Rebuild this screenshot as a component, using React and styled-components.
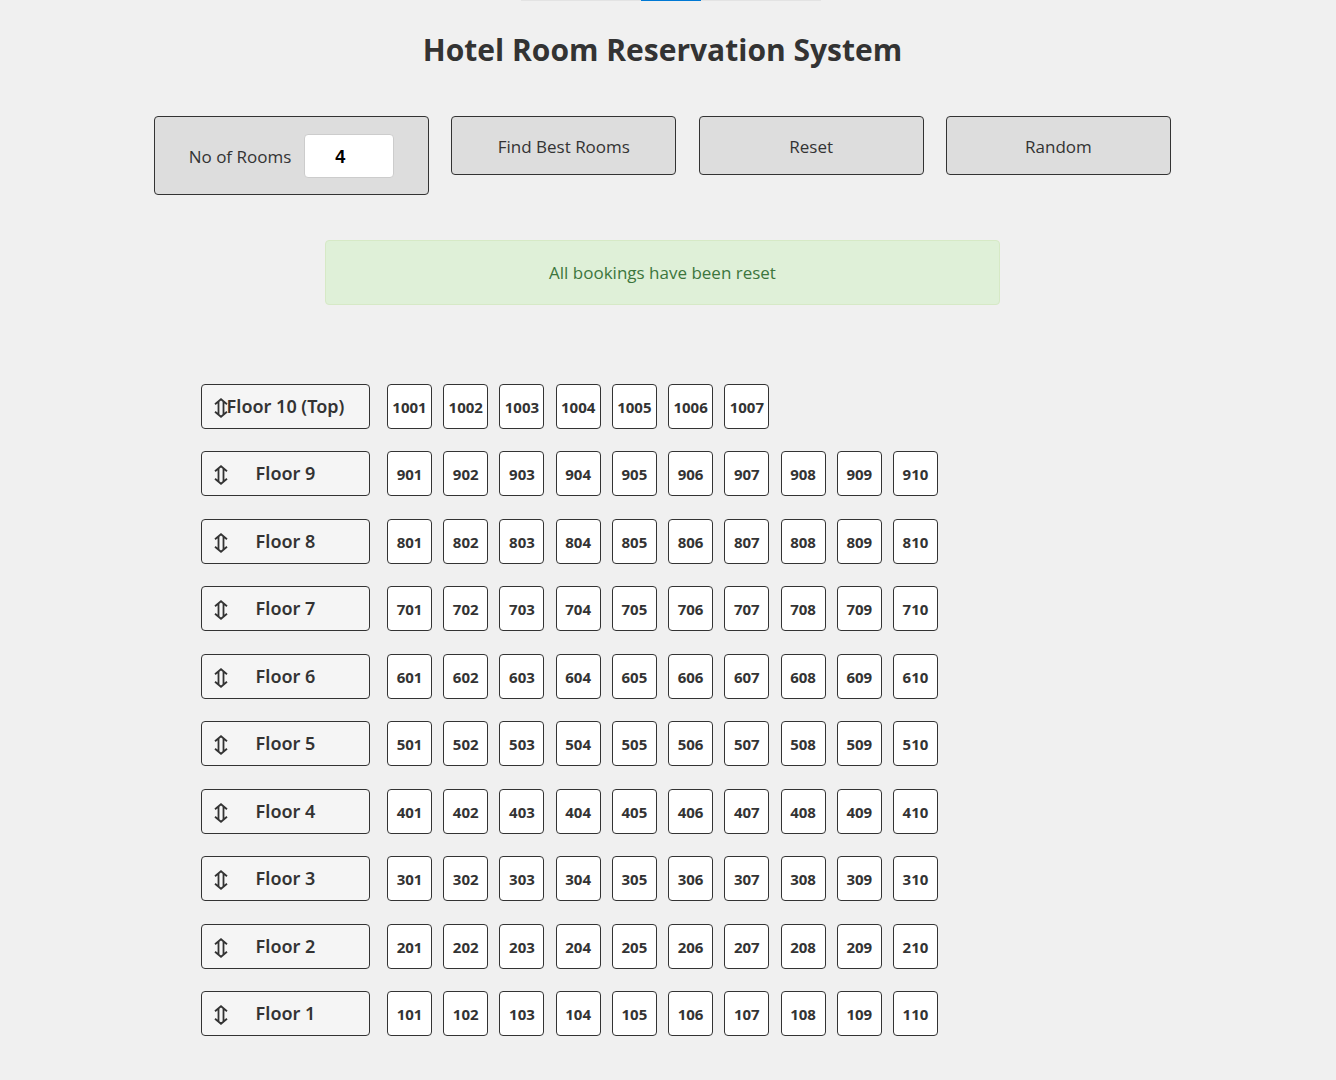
import React, { useState } from "react";
import styled, { createGlobalStyle } from "styled-components";

const GlobalStyle = createGlobalStyle`
  *, *::before, *::after { box-sizing: border-box; }
  body {
    margin: 0;
    background: #f0f0f0;
    color: #333;
    font-family: "Segoe UI", "Open Sans", "Noto Sans", sans-serif;
    font-size: 18px;
  }
  button, input { font: inherit; color: inherit; margin: 0; }
`;

const Page = styled.div`
  position: relative;
  display: flex;
  flex-direction: column;
  align-items: center;
  padding: 26px 11px 44px 0;
`;

const TabStrip = styled.div`
  position: absolute;
  top: 0;
  left: 0;
  right: 0;
  height: 1px;
  display: flex;
  justify-content: center;
  padding-left: 5px;
`;

const TabEdge = styled.span`
  width: ${(p) => (p.$active ? 60 : 120)}px;
  background: ${(p) => (p.$active ? "#0078d4" : "#e3e3e3")};
`;

const Title = styled.h1`
  margin: 0 0 42px;
  font-size: 30px;
  line-height: 48px;
  font-weight: 700;
  text-align: center;
`;

const Toolbar = styled.div`
  display: flex;
  align-items: flex-start;
  justify-content: space-between;
  width: 100%;
  max-width: 1017px;
  margin-bottom: 45px;
`;

const RoomCount = styled.label`
  display: flex;
  align-items: center;
  justify-content: center;
  gap: 13px;
  width: 275px;
  padding: 17px 0 16px;
  border: 1px solid #333;
  border-radius: 4px;
  background: #ddd;
  font-size: 17px;
  line-height: 27px;
`;

const CountInput = styled.input`
  width: 90px;
  height: 44px;
  padding: 2px 18px 0 0;
  border: 1px solid #ccc;
  border-radius: 4px;
  background: #fff;
  color: #000;
  font-family: Arial, "Liberation Sans", sans-serif;
  font-size: 18px;
  font-weight: 700;
  text-align: center;
  appearance: textfield;
  &::-webkit-inner-spin-button { appearance: none; margin: 0; }
`;

const ActionButton = styled.button`
  width: 225px;
  padding: 16px 0 14px;
  border: 1px solid #333;
  border-radius: 4px;
  background: #ddd;
  font-size: 17px;
  line-height: 27px;
  cursor: pointer;
`;

const Message = styled.div`
  width: 100%;
  max-width: 675px;
  margin-bottom: 79px;
  padding: 18px;
  border: 1px solid #d6e9c6;
  border-radius: 4px;
  background: #dff0d8;
  color: #3c763d;
  font-size: 17px;
  line-height: 27px;
  text-align: center;
`;

const Building = styled.div`
  width: 100%;
  max-width: 923px;
`;

const Floor = styled.div`
  display: flex;
  gap: 17px;
  & + & { margin-top: 22px; }
  & + &:nth-child(odd) { margin-top: 23px; }
`;

const FloorLabel = styled.div`
  position: relative;
  width: 169px;
  border: 1px solid #333;
  border-radius: 4px;
  background: #f5f5f5;
  font-family: "Segoe UI", "Noto Sans", "Open Sans", sans-serif;
  font-weight: 600;
  line-height: 43px;
  text-align: center;
`;

const LiftIcon = styled.svg`
  position: absolute;
  left: 12px;
  top: 13px;
`;

const Rooms = styled.div`
  display: grid;
  grid-template-columns: repeat(10, 45px);
  justify-content: space-between;
  width: 551px;
`;

const Room = styled.button`
  height: 45px;
  padding: 0;
  border: 1px solid #333;
  border-radius: 4px;
  background: #fff;
  font-size: 15px;
  font-weight: 700;
  line-height: 20px;
  cursor: pointer;
`;

const floors = Array.from({ length: 10 }, (_, i) => 10 - i);

export default function App() {
  const [count, setCount] = useState(4);
  return (
    <>
      <GlobalStyle />
      <Page>
        <TabStrip aria-hidden="true">
          <TabEdge />
          <TabEdge $active />
          <TabEdge />
        </TabStrip>
        <Title>Hotel Room Reservation System</Title>
        <Toolbar>
          <RoomCount>
            No of Rooms
            <CountInput
              type="number"
              min="1"
              max="5"
              value={count}
              onChange={(e) => setCount(e.target.value)}
            />
          </RoomCount>
          <ActionButton type="button">Find Best Rooms</ActionButton>
          <ActionButton type="button">Reset</ActionButton>
          <ActionButton type="button">Random</ActionButton>
        </Toolbar>
        <Message role="status">All bookings have been reset</Message>
        <Building>
          {floors.map((floor) => (
            <Floor key={floor}>
              <FloorLabel>
                <LiftIcon width="14" height="20" viewBox="0 0 14 20" aria-hidden="true">
                  <path
                    d="M1 6.2 7 1.2l6 5M1 13.8 7 18.8l6-5M4.5 4v12M9.5 4v12"
                    fill="none"
                    stroke="#333"
                    strokeWidth="1.8"
                  />
                </LiftIcon>
                Floor {floor}
                {floor === 10 && " (Top)"}
              </FloorLabel>
              <Rooms>
                {Array.from({ length: floor === 10 ? 7 : 10 }, (_, i) => (
                  <Room type="button" key={i}>
                    {floor * 100 + i + 1}
                  </Room>
                ))}
              </Rooms>
            </Floor>
          ))}
        </Building>
      </Page>
    </>
  );
}
